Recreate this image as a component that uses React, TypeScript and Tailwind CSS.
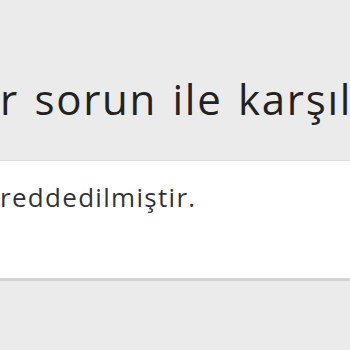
export default function App() {
  return (
    <div
      className="w-[350px] h-[350px] overflow-hidden bg-[#ebebeb] text-[#333]"
      style={{ fontFamily: '"Open Sans", "Noto Sans", sans-serif' }}
    >
      <div className="pt-[75px] h-[160px] overflow-hidden">
        <h1 className="whitespace-nowrap text-[42px] leading-[48px] tracking-[1.7px] [word-spacing:3px] font-normal text-[#222]">
          r sorun ile karşılaşıldı
        </h1>
      </div>
      <div className="h-[121px] bg-white border-t border-[#dcdcdc] border-b-[3px] border-b-[#d2d2d2] pt-[21px]">
        <p className="whitespace-nowrap text-[26px] leading-[30px] tracking-[1.3px] text-[#333]">reddedilmiştir.</p>
      </div>
    </div>
  );
}
